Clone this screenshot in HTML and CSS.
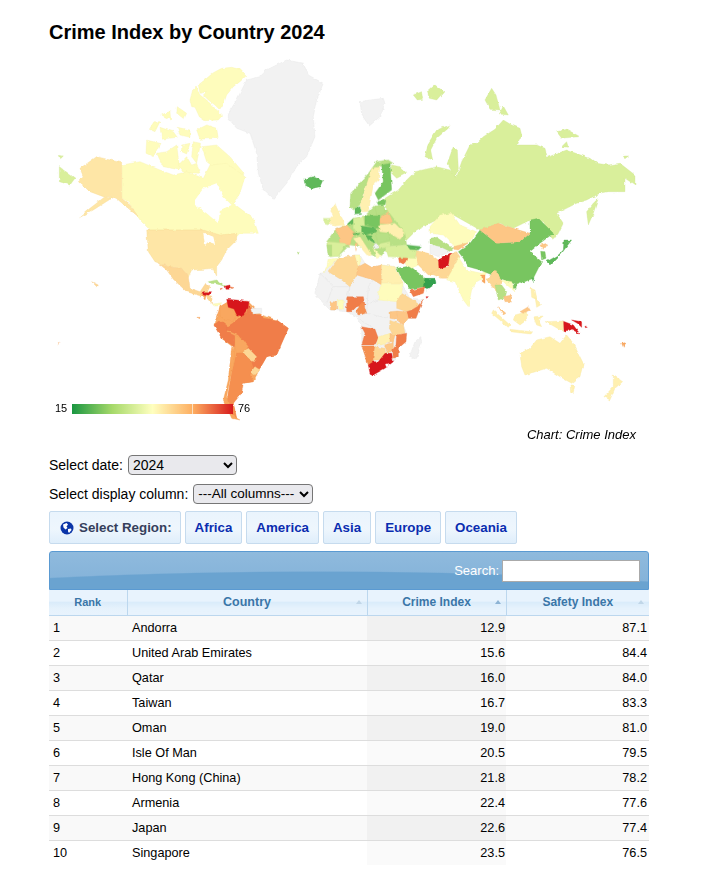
FILE: index.html
```html
<!DOCTYPE html>
<html lang="en">
<head>
<meta charset="utf-8">
<title>Crime Index by Country 2024</title>
<link rel="stylesheet" href="styles.css">
</head>
<body>
<main class="page">
<h1 class="title">Crime Index by Country 2024</h1>
<svg class="map" viewBox="49 50 600 395" width="600" height="395" role="img" aria-label="World map of crime index">
<defs>
<linearGradient id="scale"><stop offset="0" stop-color="#1a9641"/><stop offset=".25" stop-color="#a6d96a"/><stop offset=".5" stop-color="#ffffbf"/><stop offset=".75" stop-color="#fdae61"/><stop offset="1" stop-color="#d7191c"/></linearGradient>
<filter id="rough" filterUnits="userSpaceOnUse" x="49" y="50" width="600" height="395">
<feTurbulence type="fractalNoise" baseFrequency=".22" numOctaves="2" seed="4" result="n"/>
<feDisplacementMap in="SourceGraphic" in2="n" scale="3" xChannelSelector="R" yChannelSelector="G"/>
<feGaussianBlur stdDeviation=".3"/>
</filter>
</defs>
<g filter="url(#rough)">
<g transform="translate(340 50) scale(.3333)">
<polygon class="r" points="140,480 135,445 175,420 200,390 225,365 290,350 330,360 350,380 365,335 390,285 410,280 430,260 465,238 490,210 515,225 540,235 545,255 530,285 590,285 615,295 622,322 680,300 750,325 770,340 805,345 840,340 885,375 885,405 855,385 855,425 805,425 780,430 740,450 710,460 650,490 670,520 655,550 640,570 610,515 570,510 520,535 480,520 420,540 340,495 290,510 230,540 200,570 180,580 140,515"/>
<polygon class="r" points="155,345 180,350 200,370 170,385 150,365"/>
<polygon class="r" points="255,320 265,280 290,240 330,225 325,235 290,265 272,300 278,330"/>
<polygon class="r" points="322,340 340,290 352,300 355,355 345,382 330,355"/>
<polygon class="r" points="435,150 455,115 468,135 480,180 450,178"/>
<polygon class="r" points="478,192 490,168 505,195"/>
<polygon class="r" points="650,245 680,238 720,260 695,262 665,265"/>
<polygon class="r" points="665,290 680,275 685,292"/>
<polygon class="r" points="740,485 760,460 775,445 760,490 745,525"/>
<polygon class="r" points="220,135 245,125 248,148 232,150"/>
<polygon class="r" points="262,125 285,105 312,125 290,150 268,145"/>
<polygon class="r" points="850,318 866,318 855,326"/>
<polygon class="g" points="60,155 90,150 130,145 135,160 120,200 88,228 65,195"/>
</g>
<g transform="translate(40 50) scale(.3333)">
<polygon class="g" points="565,190 590,150 620,90 660,80 680,60 740,30 790,40 805,75 850,100 830,150 820,200 825,260 800,320 770,350 740,400 700,448 670,420 655,370 650,310 630,250 590,235 565,205"/>
<polygon class="r" points="58,350 105,385 90,405 58,395"/>
<polygon class="r" points="58,316 70,318 62,326"/>
<polygon class="y" points="475,105 500,85 520,68 545,55 575,52 600,58 618,78 600,95 580,110 560,135 550,165 540,180 525,165 505,150 490,135 500,125 480,130"/>
<polygon class="y" points="450,150 458,120 468,112 480,135 500,150 530,180 548,195 535,210 495,212 478,200 465,172 455,170"/>
<polygon class="y" points="470,240 500,225 530,235 535,265 480,268"/>
<polygon class="y" points="320,270 360,280 340,320 318,310"/>
<polygon class="y" points="350,310 380,305 410,285 420,360 370,350"/>
<polygon class="y" points="328,238 342,215 360,215 345,245"/>
<polygon class="y" points="360,232 400,245 412,262 365,268"/>
<polygon class="y" points="412,232 450,240 450,262 420,255"/>
<polygon class="y" points="412,170 440,190 432,207 410,190"/>
<polygon class="y" points="365,195 390,182 392,210"/>
<polygon class="y" points="425,285 450,280 440,312 425,305"/>
<polygon class="y" points="460,275 482,280 470,340 455,320"/>
<polygon class="y" points="415,345 440,320 455,345 470,340 480,370 430,368"/>
<polygon class="y" points="485,290 530,285 570,320 612,370 595,420 545,370 500,335"/>
<polygon class="y" points="245,345 300,335 360,360 400,375 440,365 490,385 510,345 560,340 615,380 600,430 580,460 640,505 655,550 600,550 560,590 530,585 490,540 330,540 300,510 265,455 245,445"/>
<polygon class="w" points="465,450 490,415 530,400 550,440 575,465 540,480 535,520 500,490 465,465"/>
<polygon class="u" points="120,355 170,320 245,338 245,445 270,465 295,500 270,480 235,450 215,440 190,440 150,425 115,395 130,380"/>
<polygon class="u" points="195,440 215,445 160,480 115,505 150,475"/>
<polygon class="q" points="792,388 820,380 848,392 840,410 815,416 795,405"/>
</g>
<g transform="translate(40 240) scale(.3333)">
<polygon class="u" points="320,-30 490,-30 540,-15 590,-20 590,0 560,30 545,60 530,80 530,108 518,85 490,88 455,90 445,112 425,85 385,80 345,65 325,35"/>
<polygon class="w" points="490,-22 520,-10 525,12 505,5 495,15 492,-5"/>
<polygon class="v" points="355,70 385,80 425,85 445,110 450,145 480,155 497,130 510,140 500,160 482,168 440,155 400,118 380,90"/>
<polygon class="w" points="360,78 385,118 390,122 370,88"/>
<polygon class="o2" points="482,162 500,160 495,180"/>
<polygon class="k" points="486,155 515,155 505,168 490,165"/>
<polygon class="v" points="498,165 515,168 518,192 505,180"/>
<polygon class="y" points="518,192 545,188 540,198 522,198"/>
<polygon class="t" points="505,125 530,120 560,140 530,132 510,130"/>
<polygon class="k" points="556,138 570,135 570,148 558,148"/>
<polygon class="o" points="570,140 582,143 572,148"/>
<polygon class="o" points="540,145 550,145 548,149"/>
<polygon class="o2" points="525,245 540,200 565,185 625,185 665,225 710,240 745,265 725,310 710,345 680,350 660,385 640,425 610,430 580,490 590,535 575,525 560,490 575,400 583,325 545,295 522,255"/>
<polygon class="o2" points="540,200 565,185 570,205 590,225 578,245 555,240 540,225"/>
<polygon class="o2" points="525,245 535,225 555,240 540,255 525,250"/>
<polygon class="o" points="622,195 640,210 635,225 625,215"/>
<polygon class="o" points="522,255 540,240 565,260 560,275 590,290 583,320 575,315 545,295"/>
<polygon class="o" points="560,262 578,250 600,232 625,210 630,222 665,225 670,235 710,240 745,265 725,310 710,345 680,350 660,385 640,390 630,350 620,320 595,285 560,270"/>
<polygon class="k" points="560,178 590,180 627,185 624,205 605,230 590,224 582,207 565,202"/>
<polygon class="g" points="635,205 665,205 665,220 640,222"/>
<polygon class="o2" points="585,285 610,300 625,320 610,335 590,340 585,320"/>
<polygon class="v" points="610,335 625,325 650,350 640,365 620,350"/>
<polygon class="v" points="630,395 645,380 660,390 645,405"/>
<polygon class="o1" points="590,340 610,340 635,365 640,385 630,405 640,425 610,430 605,460 580,490 590,535 575,525 560,490 565,460 575,400 585,360"/>
<polygon class="o2" points="575,320 583,325 583,365 570,420 560,470 575,525 600,540 575,535 550,480 565,420"/>
<polygon class="t" points="772,33 778,36 775,40"/>
<polygon class="v" points="155,125 175,135 172,142"/>
<polygon class="o2" points="52,308 60,307 55,313"/>
<polygon class="o2" points="474,232 480,232 478,237"/>
</g>
<g transform="translate(310 250) scale(.3333)">
<polygon class="g" points="15,130 30,70 40,68 60,50 85,25 135,15 150,15 165,40 185,52 215,45 255,50 275,100 300,145 340,148 318,205 295,205 280,225 290,250 288,275 265,295 265,320 250,335 225,355 190,375 175,345 155,285 155,230 140,200 110,185 60,180 40,160"/>
<g class="lines"><polyline points="30,70 70,110 50,160"/><polyline points="70,110 120,110 110,140"/><polyline points="120,110 110,185"/><polyline points="165,165 205,150"/><polyline points="175,110 170,190 235,205"/><polyline points="190,90 175,110"/><polyline points="150,210 200,240"/></g>
<polygon class="y" points="40,68 60,50 85,25 55,28 50,50"/>
<polygon class="v" points="55,65 85,25 135,15 145,50 140,75 120,110 95,90"/>
<polygon class="y" points="135,15 150,15 150,45 145,50"/>
<polygon class="n" points="142,52 165,40 185,52 215,45 215,105 190,90 140,75"/>
<polygon class="z" points="215,45 255,50 280,100 215,100"/>
<polygon class="y" points="215,100 280,100 275,130 260,155 205,150 205,130"/>
<polygon class="v" points="260,155 275,130 300,145 330,165 305,180 290,185 260,175"/>
<polygon class="o" points="305,180 330,165 340,148 318,205 295,205 290,185"/>
<polygon class="n" points="262,183 290,185 295,205 280,225 260,210"/>
<polygon class="n" points="240,185 262,183 260,208 240,205"/>
<polygon class="v" points="240,210 280,225 285,250 250,258 238,235"/>
<polygon class="o" points="110,140 160,140 165,165 140,170 125,185 110,185"/>
<polygon class="o1" points="140,180 160,155 170,190 145,195"/>
<polygon class="n" points="60,155 80,155 80,180 62,180"/>
<polygon class="y" points="82,150 100,150 100,178 84,178"/>
<polygon class="o" points="155,230 195,238 205,265 195,285 155,285 165,250"/>
<polygon class="z" points="205,260 240,250 240,275 215,285 200,285"/>
<polygon class="n" points="240,250 255,255 250,275 240,275"/>
<polygon class="o1" points="155,288 195,288 190,340 175,345"/>
<polygon class="v" points="195,290 225,295 230,320 205,330 190,330"/>
<polygon class="n" points="222,285 250,278 250,300 235,310"/>
<polygon class="o" points="260,255 290,250 288,275 265,295 265,320 250,325 248,300 258,285"/>
<polygon class="k" points="175,345 190,335 205,335 225,310 245,310 250,335 225,355 190,375 180,370"/>
<polygon class="w" points="226,342 236,340 236,350 228,350"/>
<polygon class="g" points="300,315 315,275 332,260 335,275 320,325 305,325"/>
<polygon class="l" points="260,55 300,48 345,85 375,90 345,110 300,118 275,85"/>
<polygon class="q2" points="345,85 375,85 378,100 350,120 340,110"/>
<polygon class="o" points="300,122 345,110 340,130 310,140"/>
</g>
<g transform="translate(340 240) scale(.3333)">
<polygon class="o" points="175,50 205,45 205,60 190,72 178,68"/>
<polygon class="y" points="205,48 220,35 235,75 215,85 195,72"/>
<polygon class="v" points="220,30 265,40 295,60 300,100 265,105 235,75"/>
<polygon class="k" points="295,60 330,40 345,42 330,70 310,90 297,85"/>
<polygon class="k" points="668,243 700,255 720,282 695,268 672,275"/>
<polygon class="k" points="695,240 725,245 725,262 712,250"/>
<polygon class="k" points="735,258 742,262 736,263"/>
<polygon class="z" points="540,340 570,325 590,300 630,290 660,310 680,285 700,310 730,370 720,410 695,430 660,410 620,385 555,405 545,380"/>
<polygon class="z" points="690,435 705,435 700,458 692,455"/>
<polygon class="z" points="820,405 848,425 825,445 810,480 792,470 820,440"/>
<polygon class="o2" points="845,310 855,308 850,322"/>
<polygon class="k" points="258,170 265,170 260,175"/>
</g>
<g transform="translate(310 150) scale(.3333)">
<polygon class="t" points="50,275 75,240 110,225 130,205 165,197 195,168 235,185 285,250 290,285 235,290 215,320 185,315 150,290 120,285 85,318 60,320"/>
<polygon class="t" points="120,170 122,130 175,70 200,35 235,30 250,40 205,50 180,80 160,130 150,165 130,180"/>
<polygon class="z" points="185,55 210,50 205,90 190,105 185,130 175,185 155,185 150,165 165,120"/>
<polygon class="l" points="215,45 240,40 245,120 205,150 195,130 220,95"/>
<polygon class="l" points="200,155 228,150 225,165 205,165"/>
<polygon class="t" points="195,168 225,165 222,195 200,195"/>
<polygon class="q" points="135,175 150,170 155,190 135,192"/>
<polygon class="z" points="75,160 90,195 105,225 75,228 50,215 70,195 60,180"/>
<polygon class="r" points="40,205 60,205 55,225 45,222"/>
<polygon class="q" points="112,222 130,205 132,220 118,225"/>
<polygon class="r" points="130,205 160,200 165,240 140,250 130,235"/>
<polygon class="l" points="165,197 210,198 208,235 165,225"/>
<polygon class="n" points="210,205 235,185 248,215 235,222 210,220"/>
<polygon class="z" points="205,225 255,220 285,250 270,268 240,250 210,245"/>
<polygon class="n" points="75,240 110,225 135,250 125,265 120,285 90,282 85,250"/>
<polygon class="q" points="155,228 200,235 200,245 165,255 155,245"/>
<polygon class="q" points="165,255 185,258 195,280 175,270"/>
<polygon class="t" points="195,250 235,248 240,270 205,280"/>
<polygon class="r" points="50,275 110,280 85,318 60,320"/>
<polygon class="t" points="50,285 65,285 65,318 55,318"/>
<polygon class="z" points="130,265 150,260 185,315 175,320 150,290"/>
<polygon class="g" points="190,280 205,282 208,295 195,295"/>
<polygon class="r" points="205,282 240,275 240,290 210,295"/>
<polygon class="y" points="190,295 215,320 200,325"/>
<polygon class="r" points="225,290 290,285 320,300 315,325 235,320"/>
<polygon class="q" points="290,285 335,290 325,300 300,298"/>
<polygon class="q" points="128,250 150,250 140,258"/>
<polygon class="n" points="135,280 142,280 138,303"/>
</g>
<g transform="translate(430 210) scale(.3333)">
<polygon class="y" points="0,50 30,15 65,10 90,45 140,65 115,100 75,110 40,75 0,70"/>
<polygon class="t" points="0,85 20,82 60,110 75,110 60,125 25,110 0,100"/>
<polygon class="g" points="0,105 30,110 60,125 25,140 0,130"/>
<polygon class="n" points="70,110 115,98 85,120 72,118"/>
<polygon class="v" points="28,178 55,170 60,135 80,125 90,140 75,165 60,205 35,205 0,190"/>
<polygon class="y" points="75,165 85,140 110,180 155,190 175,180 160,205 140,215 125,240 115,290 100,270 75,215 50,210"/>
<polygon class="l" points="85,125 120,100 150,60 200,100 270,95 300,70 300,30 325,25 370,70 330,100 300,125 335,155 310,205 260,225 210,205 150,180 115,170 100,145"/>
<polygon class="n" points="150,60 205,40 250,55 300,70 270,95 200,100"/>
<polygon class="n" points="330,105 352,100 338,120"/>
<polygon class="l" points="332,124 345,125 348,145 335,150"/>
<polygon class="q" points="350,155 385,135 400,120 402,90 425,90 395,130 360,165"/>
<polygon class="q" points="305,203 312,203 310,218"/>
<polygon class="o2" points="155,195 165,195 165,220 157,215"/>
<polygon class="v" points="170,210 195,180 215,210 205,250 190,235"/>
<polygon class="t" points="195,225 215,225 230,245 225,265 205,270"/>
<polygon class="n" points="220,260 245,255 240,275 225,275"/>
<polygon class="y" points="215,210 245,215 255,245 225,220"/>
<polygon class="l" points="250,225 260,222 258,235 250,235"/>
<polygon class="n" points="205,290 228,310 220,315"/>
<polygon class="z" points="190,300 240,345 235,352 185,310"/>
<polygon class="z" points="240,358 305,365 300,372 240,365"/>
<polygon class="z" points="255,315 290,305 290,330 270,345 250,330"/>
<polygon class="n" points="270,305 295,290 300,300 280,310"/>
<polygon class="z" points="310,320 340,318 325,330 335,350 320,345"/>
<polygon class="z" points="303,235 315,240 322,270 305,262"/>
<polygon class="z" points="315,262 332,285 320,292"/>
<polygon class="z" points="345,335 400,333 400,365 365,345"/>
<polygon class="w" points="300,125 315,118 325,128 308,130"/>
</g>
</g>
<rect x="72" y="404" width="161" height="10" fill="url(#scale)"/>
<rect x="192" y="404" width="1" height="10" fill="#fbe0c0"/>
<text class="legend" x="55" y="412">15</text>
<text class="legend halo" x="238" y="412">76</text>
<text class="caption" x="636" y="439" text-anchor="end">Chart: Crime Index</text>
</svg>

<div class="field"><label class="field-label" for="date">Select date:</label><select class="select select-date" id="date"><option>2024</option></select></div>
<div class="field"><label class="field-label" for="col">Select display column:</label><select class="select select-col" id="col"><option>---All columns---</option></select></div>

<nav class="regions">
<span class="btn btn-label"><svg class="globe" viewBox="0 0 14 14" width="14" height="14"><circle cx="7" cy="7" r="6.5" fill="#0b35a8"/><path d="M3 3.5 6.5 2 8 3.5 6.5 5.5 7.5 7 5.5 8.5 3.5 6.5zM8 8l3-.5.5 1.5L9 12 8 10.5z" fill="#fff"/></svg>Select Region:</span>
<a class="btn" href="#">Africa</a>
<a class="btn" href="#">America</a>
<a class="btn" href="#">Asia</a>
<a class="btn" href="#">Europe</a>
<a class="btn" href="#">Oceania</a>
</nav>

<section class="grid">
<div class="toolbar"><label class="search-label" for="q">Search:</label><input class="search" id="q" type="text"></div>
<table class="table">
<colgroup><col class="c-rank"><col class="c-country"><col class="c-crime"><col class="c-safety"></colgroup>
<thead><tr>
<th class="th-rank">Rank</th>
<th class="th-country">Country<i class="sort"></i></th>
<th>Crime Index<i class="sort sort-on"></i></th>
<th>Safety Index<i class="sort"></i></th>
</tr></thead>
<tbody>
<tr><td>1</td><td>Andorra</td><td class="num key">12.9</td><td class="num">87.1</td></tr>
<tr><td>2</td><td>United Arab Emirates</td><td class="num key">15.6</td><td class="num">84.4</td></tr>
<tr><td>3</td><td>Qatar</td><td class="num key">16.0</td><td class="num">84.0</td></tr>
<tr><td>4</td><td>Taiwan</td><td class="num key">16.7</td><td class="num">83.3</td></tr>
<tr><td>5</td><td>Oman</td><td class="num key">19.0</td><td class="num">81.0</td></tr>
<tr><td>6</td><td>Isle Of Man</td><td class="num key">20.5</td><td class="num">79.5</td></tr>
<tr><td>7</td><td>Hong Kong (China)</td><td class="num key">21.8</td><td class="num">78.2</td></tr>
<tr><td>8</td><td>Armenia</td><td class="num key">22.4</td><td class="num">77.6</td></tr>
<tr><td>9</td><td>Japan</td><td class="num key">22.6</td><td class="num">77.4</td></tr>
<tr><td>10</td><td>Singapore</td><td class="num key">23.5</td><td class="num">76.5</td></tr>
</tbody>
</table>
</section>
</main>
</body>
</html>
```

FILE: styles.css
```css
* { box-sizing: border-box; }
body { margin: 0; background: #fff; color: #000; font-family: "Liberation Sans", Arial, sans-serif; font-size: 14px; }
.page { width: 600px; margin-left: 49px; }
.title { margin: 0; height: 50px; padding-top: 20px; font-size: 20px; line-height: 24px; font-weight: bold; }
.map { display: block; }
.map polygon { stroke-width: 1; stroke-linejoin: round; }
.r { fill: #d9ef9b; stroke: #cfe592; }
.g { fill: #f2f2f2; stroke: #e2e2e2; }
.y { fill: #fefcbc; stroke: #f6f0ac; }
.z { fill: #fff0b0; stroke: #f7e6a0; }
.u { fill: #fee6a6; stroke: #f6d88f; }
.v { fill: #fdd795; stroke: #f5cc88; }
.n { fill: #fdc685; stroke: #f4ba78; }
.o2 { fill: #f9a75e; stroke: #f29d55; }
.o1 { fill: #f58f50; stroke: #ee8548; }
.o { fill: #f07d4a; stroke: #ea7545; }
.k { fill: #d7191c; stroke: #d7191c; }
.t { fill: #b8e085; stroke: #aed87a; }
.l { fill: #78c560; stroke: #6fbd58; }
.q { fill: #5fb85a; stroke: #57b054; }
.q2 { fill: #33a04d; stroke: #2f9848; }
.w { fill: #fff; stroke: none; }
.lines polyline { fill: none; stroke: #dcdcdc; stroke-width: 1; }
.legend { font-size: 11px; fill: #000; }
.halo { paint-order: stroke; stroke: #fff; stroke-width: 3px; }
.caption { font-size: 13px; font-style: italic; fill: #000; }
.field { height: 29px; display: flex; align-items: center; gap: 5px; }
.field:first-of-type { margin-top: 5px; }
.select { height: 20px; padding: 0; font: 14px "Liberation Sans", Arial, sans-serif; background-color: #e9e9ed; border: 1px solid #767676; border-radius: 4px; color: #000; }
.select-date { width: 109px; }
.select-col { width: 120px; font-size: 13.5px; }
.regions { display: flex; gap: 4px; margin-top: 3px; height: 33px; }
.btn { display: flex; align-items: center; padding: 0 9px; border: 1px solid #c6dbee; border-radius: 2px; background: linear-gradient(#eaf4fd 0%, #eef6fd 55%, #dfeefb 100%); color: #0a2db0; font-weight: bold; font-size: 13.33px; text-decoration: none; }
.btn-label { color: #35405c; padding: 0 8px 0 10px; gap: 5px; }
.globe { flex: none; }
.grid { margin-top: 7px; }
.toolbar { height: 39px; display: flex; justify-content: flex-end; align-items: center; gap: 3px; padding-right: 8px; border: 1px solid #5a9ad2; border-radius: 3px 3px 0 0; background: radial-gradient(ellipse 600px 60px at 45% 79px, #6aa3d0 98%, transparent 100%), linear-gradient(#8fbadd, #82b1d8); }
.search-label { color: #fff; font-size: 13px; }
.search { width: 138px; height: 22px; border: 1px solid #aaa; background: #fff; padding: 0; }
.table { width: 600px; border-collapse: collapse; table-layout: fixed; font-size: 12.7px; }
.c-rank { width: 78px; }
.c-country { width: 240px; }
.c-crime { width: 139px; }
.c-safety { width: 143px; }
.table th { position: relative; height: 25px; padding: 0; text-align: center; color: #3a76a8; font-size: 12px; font-weight: bold; background: linear-gradient(#e8f3fd 0%, #e8f3fd 45%, #d9ebfa 48%, #e6f2fc 75%, #e8f3fd 100%); border-right: 1px solid #bcd7ee; border-bottom: 1px solid #bcd7ee; }
.table th:last-child { border-right: 0; }
.table .th-rank { font-size: 11px; }
.table .th-country { font-size: 12.5px; }
.sort { position: absolute; right: 5px; top: 10px; width: 0; height: 0; border-left: 3px solid transparent; border-right: 3px solid transparent; border-bottom: 4px solid #c0d6e8; }
.sort-on { border-bottom-color: #8db3d4; }
.table td { height: 25px; padding: 0 4px; border-bottom: 1px solid #ddd; }
.table td + td { padding-left: 5px; }
.table tbody tr:last-child td { border-bottom: 0; }
.table tbody tr:nth-child(odd) td { background: #f9f9f9; }
.table tbody tr:nth-child(odd) td.key { background: #f1f1f1; }
.table td.key { background: #fafafa; }
.table td.num { text-align: right; padding: 0 2px 0 0; }
.table td.key { padding-right: 1px; }
```
